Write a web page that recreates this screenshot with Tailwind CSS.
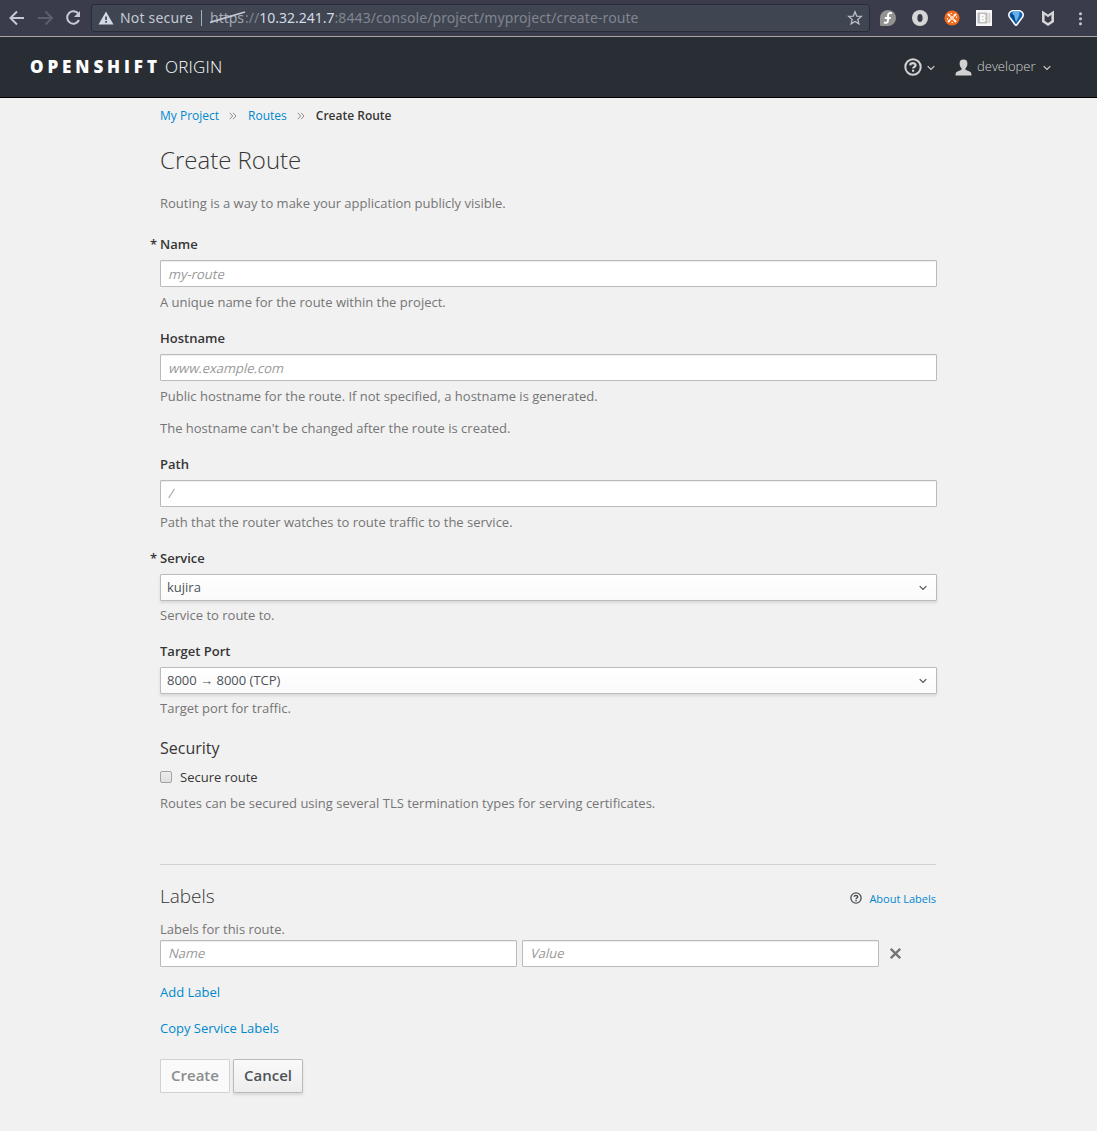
<!DOCTYPE html>
<html lang="en">
<head>
<meta charset="utf-8">
<title>Create Route</title>
<script src="https://cdn.jsdelivr.net/npm/@tailwindcss/browser@4"></script>
</head>
<body class="h-[1131px] overflow-hidden bg-[#f1f1f1] font-['Open_Sans',sans-serif] text-[13px] leading-5 text-[#363636]">
<!-- Browser toolbar -->
<div class="flex h-[37px] items-start border-b border-[#aaa5a5] bg-[#3a3c4c]">
  <svg class="mt-[9px] ml-[7px] h-[18px] w-[18px] shrink-0" viewBox="0 0 18 18" fill="none" stroke="#c5c9d3" stroke-width="2"><path d="M17 9H4M10 2.500 3.500 9l6.500 6.500"/></svg>
  <svg class="mt-[9px] ml-[12px] h-[18px] w-[18px] shrink-0" viewBox="0 0 18 18" fill="none" stroke="#5b5e6d" stroke-width="2"><path d="M1 9h13M8.500 2.500 15 9l-6.500 6.500"/></svg>
  <svg class="mt-[9px] ml-[9px] h-[18px] w-[18px] shrink-0" viewBox="0 0 18 18" fill="none" stroke="#c5c9d3" stroke-width="2"><path d="M14.600 5.200A6.200 6.200 0 1 0 15 11"/><path d="M16 2v6h-6z" fill="#c5c9d3" stroke="none"/></svg>
  <div class="mt-[4px] ml-[9px] flex h-[28px] w-[779px] shrink-0 items-center rounded-[3px] border border-[#292c37] bg-[#404552] font-['Noto_Sans',sans-serif] text-[14px] whitespace-nowrap text-[#c5c9d3]">
    <svg class="ml-[6px] h-[14px] w-[16px]" viewBox="0 0 16 14"><path d="M8 .5 15.500 13.500H.5z" fill="#d3dae3"/><path d="M7.200 5.500h1.700v3.500H7.200zM7.200 10h1.700v1.700H7.200z" fill="#404552"/></svg>
    <span class="ml-[6px] w-[73px] tracking-[0.180px]">Not secure</span>
    <span class="ml-[8px] h-[16px] w-px bg-[#a9adb8]"></span>
    <span class="relative ml-[8px] w-[35px] text-[#a5aab5]">https<svg class="absolute top-[2px] left-0 h-[14px] w-[36px]" viewBox="0 0 36 14"><path d="M0 12.500 35 2" stroke="#c5c9d3" stroke-width="1.800"/></svg></span>
    <span class="text-[#80858f]">://</span><span class="text-[#d3dae3]">10.32.241.7</span><span class="tracking-[0.090px] text-[#80858f]">:8443/console/project/myproject/create-route</span>
    <svg class="mr-[6px] ml-auto h-[16px] w-[16px]" viewBox="0 0 16 16" fill="none" stroke="#b9becb" stroke-width="1.300"><path d="m8 1.800 1.700 4.300 4.600.3-3.500 3 1.100 4.500L8 11.400l-3.900 2.500 1.100-4.500-3.500-3 4.600-.3z"/></svg>
  </div>
  <div class="mt-[10px] ml-[10px] flex flex-1 items-center">
    <svg class="mr-4 h-4 w-4" viewBox="0 0 16 16"><path d="M8 0a8 8 0 1 1 0 16H1.500A1.500 1.500 0 0 1 0 14.500V8a8 8 0 0 1 8-8z" fill="#929292"/><path d="M12 3.400c-2.500-1.200-4 0-4 2v5c0 2.200-1.800 3-4 2M4.800 8h6" fill="none" stroke="#fff" stroke-width="1.900"/></svg>
    <svg class="mr-4 h-4 w-4" viewBox="0 0 16 16"><circle cx="8" cy="8" r="8" fill="#d6d6d6"/><ellipse cx="8" cy="8" rx="2.600" ry="4" fill="#3a3c4c"/></svg>
    <svg class="mr-4 h-4 w-4" viewBox="0 0 16 16"><circle cx="8" cy="8" r="7.600" fill="#f26a1b"/><path d="m4 4 2.300 2.300M12 4 9.700 6.300M4 12l2.300-2.300M12 12 9.700 9.700" stroke="#fff" stroke-width="1.900"/><path d="M6.500 3.500h1.500M3.500 8v1.500M9 12.500H7.500M12.500 8V6.500" stroke="#fff" stroke-width="1"/><rect x="6" y="6" width="4" height="4" rx="1" fill="#fbd0b5"/></svg>
    <svg class="mr-4 h-4 w-4" viewBox="0 0 16 16"><path d="M0 0h16v16H0z" fill="#f7f7f7"/><rect x="1.500" y="2.500" width="10" height="11" rx="1" fill="#bdbdbd"/><path d="M12.500 3h1.800v10h-1.800z" fill="#cfcfcf"/><text x="3.200" y="11.700" font-family="Open Sans" font-size="10" font-weight="800" fill="#fff">B</text></svg>
    <svg class="mr-4 h-4 w-4" viewBox="0 0 16 16"><path d="M4 0h8q4 1.500 4 5 0 2-2 4l-4 5.500q-2 3-4 0L2 9Q0 7 0 5q0-3.500 4-5z" fill="#fff"/><path d="M4.500 1.500h7q3 1 3 3.500-.5 2-2 3.500L8 14.500 3.500 8.500Q1.500 7 1.500 5q0-2.500 3-3.500z" fill="#1560ae"/><path d="M5 1.500h6q1.500 3-3 10.500Q3.500 4.500 5 1.500z" fill="#5fb4f0"/><path d="m2 4 6 9.500L6 5z" fill="#10407c"/></svg>
    <svg class="mr-4 h-4 w-4" viewBox="0 0 16 16"><path d="M2 .5 8 4.500l6-4V12l-6 4-6-4zM4.600 4.800v5.900L8 13l3.400-2.300V4.800L8 7.300z" fill="#d5d7d7" fill-rule="evenodd"/></svg>
    <svg class="h-4 w-4" viewBox="0 0 16 16" fill="#c5c9d3"><circle cx="8.500" cy="3.700" r="1.500"/><circle cx="8.500" cy="8.700" r="1.500"/><circle cx="8.500" cy="13.700" r="1.500"/></svg>
  </div>
</div>

<!-- Console masthead -->
<header class="flex h-[61px] items-center border-b border-black bg-[#292e34] pr-[46px] pl-[30px] text-[#d1d1d1]">
  <div class="flex items-center text-[17px] leading-5 text-white"><span class="w-[135px] font-extrabold tracking-[3.900px]">OPENSHIFT</span><span class="font-light tracking-[0.200px]">ORIGIN</span></div>
  <svg class="ml-auto h-[18px] w-[18px]" viewBox="0 0 18 18" fill="none" stroke="#d1d1d1"><circle cx="9" cy="9" r="7.700" stroke-width="2"/><path d="M6.200 7.400C6.300 4.500 11.600 4.500 11.600 7.300c0 1.800-2.500 1.500-2.500 3.200M9.100 11.800v2" stroke-width="2.200"/></svg>
  <svg class="mt-[2px] ml-[5px] h-[6px] w-[8px]" viewBox="0 0 8 6" fill="none" stroke="#d1d1d1" stroke-width="1.200"><path d="M.7 1.200 4 4.500l3.300-3.300"/></svg>
  <svg class="ml-[20px] h-[17px] w-[17px]" viewBox="0 0 17 17" fill="#d1d1d1"><path d="M8.500.5c2.800 0 3.900 1.600 3.900 4 0 1.900-.7 3.700-1.900 4.800v1.500l4 1.600c1.500.6 2 1.500 2 4.100H.5c0-2.600.5-3.500 2-4.100l4-1.600V9.300C5.300 8.200 4.600 6.400 4.600 4.500c0-2.400 1.100-4 3.900-4z"/></svg>
  <span class="mb-[2px] ml-[5px] w-[58px] font-light">developer</span>
  <svg class="mt-[2px] ml-[8px] h-[6px] w-[8px]" viewBox="0 0 8 6" fill="none" stroke="#d1d1d1" stroke-width="1.200"><path d="M.7 1.200 4 4.500l3.300-3.300"/></svg>
</header>

<main class="ml-[160px] w-[777px] pt-2 text-[#757575]">
  <nav class="flex h-5 items-center text-[12px]">
    <a class="text-[#0088ce]">My Project</a>
    <svg class="mx-[10px] h-[8px] w-[8px]" viewBox="0 0 8 8" fill="none" stroke="#8c8c8c"><path d="m.7.8 3 3.200-3 3.200M4 .8 7 4 4 7.200"/></svg>
    <a class="ml-px text-[#0088ce]">Routes</a>
    <svg class="mx-[10px] h-[8px] w-[8px]" viewBox="0 0 8 8" fill="none" stroke="#8c8c8c"><path d="m.7.8 3 3.200-3 3.200M4 .8 7 4 4 7.200"/></svg>
    <span class="ml-px font-semibold text-[#363636]">Create Route</span>
  </nav>
  <h1 class="mt-[21px] text-[24px] leading-[26px] font-light text-[#363636]">Create Route</h1>
  <p class="mt-5">Routing is a way to make your application publicly visible.</p>

  <div class="mt-[21px]">
    <label class="relative block font-semibold text-[#363636]"><span class="absolute -left-[10px]">*</span>Name</label>
    <div class="mt-1.5 flex h-[27px] items-center rounded-[1px] border border-[#bbb] bg-white px-[7px] pt-px shadow-[inset_0_1px_1px_rgba(0,0,0,0.075)]"><span class="origin-[0_75%] -skew-x-[14deg] text-[#999]">my-route</span></div>
    <p class="mt-[5px]">A unique name for the route within the project.</p>
  </div>
  <div class="mt-4">
    <label class="block font-semibold text-[#363636]">Hostname</label>
    <div class="mt-1.5 flex h-[27px] items-center rounded-[1px] border border-[#bbb] bg-white px-[7px] pt-px shadow-[inset_0_1px_1px_rgba(0,0,0,0.075)]"><span class="origin-[0_75%] -skew-x-[14deg] text-[#999]">www.example.com</span></div>
    <p class="mt-[5px]">Public hostname for the route. If not specified, a hostname is generated.</p>
    <p class="mt-3">The hostname can't be changed after the route is created.</p>
  </div>
  <div class="mt-4">
    <label class="block font-semibold text-[#363636]">Path</label>
    <div class="mt-1.5 flex h-[27px] items-center rounded-[1px] border border-[#bbb] bg-white px-[7px] pb-px shadow-[inset_0_1px_1px_rgba(0,0,0,0.075)]"><span class="origin-[0_75%] -skew-x-[14deg] text-[#999]">/</span></div>
    <p class="mt-[5px]">Path that the router watches to route traffic to the service.</p>
  </div>
  <div class="mt-4">
    <label class="relative block font-semibold text-[#363636]"><span class="absolute -left-[10px]">*</span>Service</label>
    <div class="mt-1.5 flex h-[27px] items-center justify-between rounded-[1px] border border-[#bbb] bg-linear-to-b from-white to-[#fafafa] pr-[9px] pb-px pl-[6px] text-[#4d5258] shadow-[0_2px_3px_rgba(3,3,3,0.1)]">kujira
      <svg class="mt-px h-[6px] w-[8px]" viewBox="0 0 8 6" fill="none" stroke="#4d5258" stroke-width="1.200"><path d="M.7 1.200 4 4.500l3.300-3.300"/></svg></div>
    <p class="mt-1">Service to route to.</p>
  </div>
  <div class="mt-4">
    <label class="block font-semibold text-[#363636]">Target Port</label>
    <div class="mt-1.5 flex h-[27px] items-center justify-between rounded-[1px] border border-[#bbb] bg-linear-to-b from-white to-[#fafafa] pr-[9px] pb-px pl-[6px] text-[#4d5258] shadow-[0_2px_3px_rgba(3,3,3,0.1)]">8000 → 8000 (TCP)
      <svg class="mt-px h-[6px] w-[8px]" viewBox="0 0 8 6" fill="none" stroke="#4d5258" stroke-width="1.200"><path d="M.7 1.200 4 4.500l3.300-3.300"/></svg></div>
    <p class="mt-1">Target port for traffic.</p>
  </div>

  <h2 class="mt-5 text-[16px] leading-5 text-[#363636]">Security</h2>
  <label class="mt-[9px] flex items-center gap-2 text-[#363636]"><span class="h-3 w-3 rounded-[2px] border border-[#a3a3a3] bg-linear-to-b from-[#ededed] to-[#dedede]"></span>Secure route</label>
  <p class="mt-1.5">Routes can be secured using several TLS termination types for serving certificates.</p>

  <hr class="mt-[51px] w-[776px] border-[#d1d1d1]">

  <div class="mt-[21px] flex h-5 items-center">
    <h2 class="text-[19px] leading-5 font-light text-[#363636]">Labels</h2>
    <svg class="mt-[4px] ml-auto h-[12px] w-[12px]" viewBox="0 0 18 18" fill="none" stroke="#4d5258"><circle cx="9" cy="9" r="7.700" stroke-width="2"/><path d="M6.200 7.200C6.300 4.500 11.600 4.500 11.600 7.300c0 1.800-2.500 1.700-2.500 3.200M9.100 11.800v1.900" stroke-width="2.200"/></svg>
    <a class="mt-[5px] mr-px ml-[7px] text-[11px] text-[#0088ce]">About Labels</a>
  </div>
  <p class="mt-[13px]">Labels for this route.</p>
  <div class="mt-px flex items-center gap-[5px]">
    <div class="flex h-[27px] w-[357px] items-center rounded-[1px] border border-[#bbb] bg-white px-[7px] pb-px shadow-[inset_0_1px_1px_rgba(0,0,0,0.075)]"><span class="origin-[0_75%] -skew-x-[14deg] text-[#999]">Name</span></div>
    <div class="flex h-[27px] w-[357px] items-center rounded-[1px] border border-[#bbb] bg-white px-[7px] pb-px shadow-[inset_0_1px_1px_rgba(0,0,0,0.075)]"><span class="origin-[0_75%] -skew-x-[14deg] text-[#999]">Value</span></div>
    <svg class="ml-[6px] h-[11px] w-[11px]" viewBox="0 0 11 11" stroke="#757575" stroke-width="2.300"><path d="m.8.800 9.400 9.400M10.200.8.800 10.200"/></svg>
  </div>
  <p class="mt-[15px] text-[#0088ce]">Add Label</p>
  <p class="mt-4 text-[#0088ce]">Copy Service Labels</p>
  <div class="mt-[21px] flex gap-[3px] text-[15px] font-semibold">
    <button class="h-[34px] w-[70px] rounded-[1px] border border-[#d1d1d1] bg-[#fafafa] pb-[2px] text-[#8b8d8f]">Create</button>
    <button class="h-[34px] w-[70px] rounded-[1px] border border-[#bbb] bg-linear-to-b from-[#fafafa] to-[#ededed] pb-[2px] text-[#4d5258] shadow-[0_2px_3px_rgba(3,3,3,0.1)]">Cancel</button>
  </div>
</main>
</body>
</html>
